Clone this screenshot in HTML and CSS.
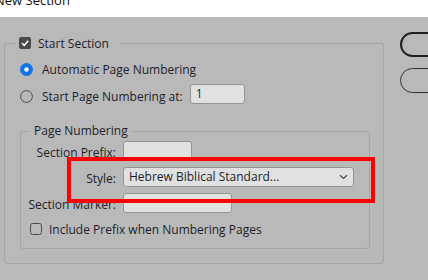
FILE: index.html
```html
<!DOCTYPE html>
<html lang="en">
<head>
  <meta charset="UTF-8" />
  <title>New Section</title>
  <link rel="stylesheet" href="styles.css">
</head>
<body>
  <div class="titlebar"><div class="title">New Section</div></div>

  <div class="dialog">
    <fieldset class="group outer">
      <legend class="legend-check">
        <svg class="box" width="12" height="12" viewBox="0 0 12 12">
          <rect x="0" y="0" width="12" height="12" rx="2" fill="#4a4a4a"/>
          <path d="M3 6.2 L5.2 8.4 L9.2 3.8" fill="none" stroke="#fff" stroke-width="1.6"/>
        </svg>
        <span>Start Section</span>
      </legend>

      <div class="radio-row">
        <svg class="radio" width="13" height="13" viewBox="0 0 13 13">
          <circle cx="6.5" cy="6.5" r="6.5" fill="#1473e6"/>
          <circle cx="6.5" cy="6.5" r="2.2" fill="#fff"/>
        </svg>
        <span>Automatic Page Numbering</span>
      </div>

      <div class="radio-row">
        <svg class="radio" width="13" height="13" viewBox="0 0 13 13">
          <circle cx="6.5" cy="6.5" r="5.9" fill="none" stroke="#4a4a4a" stroke-width="1"/>
        </svg>
        <span>Start Page Numbering at:</span>
        <div class="field field-start">1</div>
      </div>

      <fieldset class="group inner">
        <legend class="legend-text">Page Numbering</legend>

        <div class="form-grid">
          <label>Section Prefix:</label>
          <div class="field field-prefix"></div>

          <label>Style:</label>
          <div class="field field-select">
            <span>Hebrew Biblical Standard...</span>
            <svg width="9" height="6" viewBox="0 0 9 6">
              <path d="M1 1.2 L4.5 4.5 L8 1.2" fill="none" stroke="#4a4a4a" stroke-width="1.2"/>
            </svg>
          </div>

          <label>Section Marker:</label>
          <div class="field field-marker"></div>

          <div class="check-row">
            <svg class="box" width="12" height="12" viewBox="0 0 12 12">
              <rect x="0.5" y="0.5" width="11" height="11" rx="2" fill="none" stroke="#4a4a4a" stroke-width="1"/>
            </svg>
            <span>Include Prefix when Numbering Pages</span>
          </div>
        </div>
      </fieldset>
    </fieldset>

    <div class="buttons">
      <div class="btn btn-primary"></div>
      <div class="btn"></div>
    </div>
  </div>

  <div class="highlight"></div>
</body>
</html>
```

FILE: styles.css
```css
body {
  margin: 0;
  background: #b9b9b9;
  font-family: 'Open Sans', 'Noto Sans', sans-serif;
  font-size: 12px;
  color: #1e1e2a;
  width: 428px;
  height: 280px;
  overflow: hidden;
  position: relative;
}

.titlebar {
  height: 17px;
  background: #fff;
  overflow: hidden;
}

.title {
  font-size: 13px;
  line-height: 13px;
  margin-top: -6px;
  margin-left: -5px;
  color: #111;
  white-space: nowrap;
}

.dialog {
  display: flex;
  align-items: flex-start;
  padding-top: 18px;
  padding-left: 4px;
}

.group {
  margin: 0;
  border: 1px solid #a6a6a6;
  border-radius: 3px;
  box-sizing: border-box;
  min-width: 0;
}

.outer {
  width: 380px;
  padding: 8px 14px 14px 15px;
  flex-shrink: 0;
}

.legend-check {
  display: flex;
  align-items: center;
  gap: 7px;
  height: 16px;
  padding: 0 12px 0 4px;
  margin-left: -5px;
}

.radio-row {
  display: flex;
  align-items: center;
  height: 20px;
  margin-bottom: 7px;
}

.radio {
  margin-right: 9px;
  flex-shrink: 0;
}

.field {
  box-sizing: border-box;
  height: 20px;
  background: #e1e1e1;
  border: 1px solid #959595;
  border-radius: 3px;
}

.field-start {
  width: 55px;
  margin-left: 7px;
  margin-top: -4px;
  padding-left: 5px;
  line-height: 18px;
}

.inner {
  width: 350px;
  margin-top: 17px;
  padding: 2px 10px 9px 9px;
}

.legend-text {
  height: 16px;
  line-height: 16px;
  padding: 0 4px;
  margin-left: 0;
}

.form-grid {
  display: grid;
  grid-template-columns: 86px auto;
  column-gap: 7px;
  row-gap: 6px;
  align-items: center;
}

.form-grid label {
  justify-self: end;
  white-space: nowrap;
  text-align: right;
  height: 20px;
  box-sizing: border-box;
  padding-top: 3px;
  line-height: 17px;
}

.field-prefix {
  width: 69px;
}

.field-marker {
  width: 109px;
}

.field-select {
  width: 231px;
  display: flex;
  align-items: center;
  justify-content: space-between;
  padding: 0 5px;
  line-height: 18px;
}

.check-row {
  grid-column: 1 / 3;
  display: flex;
  align-items: center;
  gap: 7px;
  height: 20px;
}

.buttons {
  flex-shrink: 0;
  margin-left: 16px;
  margin-top: -3px;
  display: flex;
  flex-direction: column;
  gap: 11px;
}

.btn {
  width: 80px;
  height: 25px;
  box-sizing: border-box;
  border: 1px solid #333;
  border-radius: 13px;
}

.btn-primary {
  border: 2px solid #1e1e1e;
}

.highlight {
  position: absolute;
  left: 67px;
  top: 157px;
  width: 308px;
  height: 46px;
  box-sizing: border-box;
  border: 4px solid #ff0000;
}
```
